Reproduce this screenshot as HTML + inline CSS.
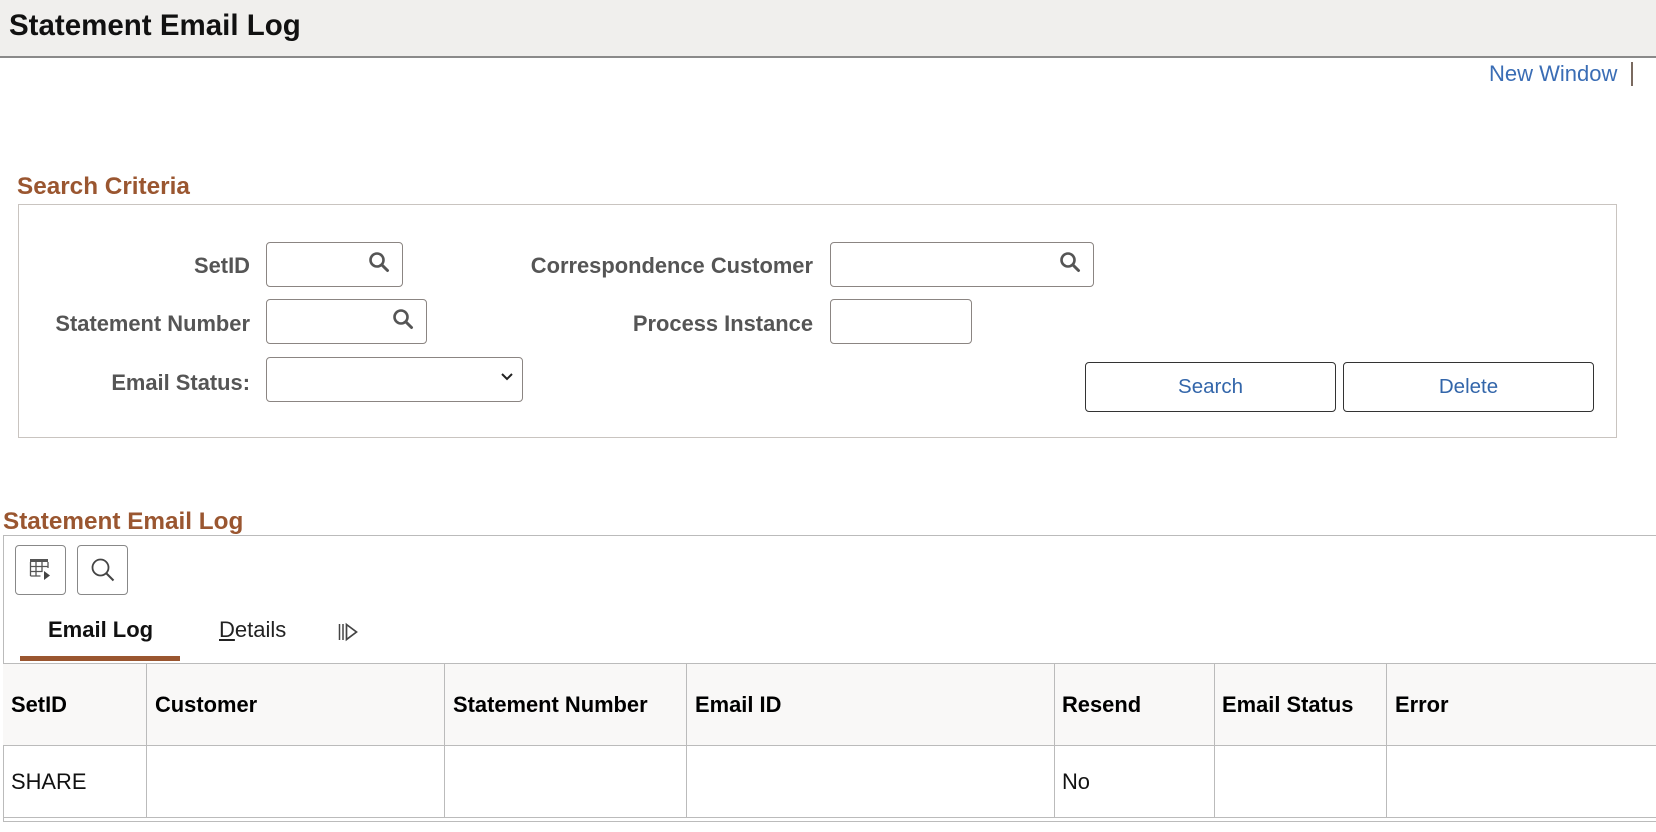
<!DOCTYPE html>
<html><head><meta charset="utf-8"><style>
*{box-sizing:border-box;margin:0;padding:0}
body{width:1656px;height:832px;background:#fff;font-family:"Liberation Sans",Arial,sans-serif;position:relative;overflow:hidden}
.a{position:absolute;white-space:nowrap}
.hdr{left:0;top:0;width:1656px;height:58px;background:#f0efed;border-bottom:2px solid #8a8a8a}
.lbl{font-weight:bold;font-size:21.9px;color:#555;text-align:right}
.inp{border:1px solid #8b8582;border-radius:4px;background:#fff;height:45px}
.h2{font-weight:bold;font-size:24.3px;color:#9a5630}
.btn{border:1px solid #333;border-radius:4px;height:50px;width:251px;font-size:20.5px;color:#3366aa;text-align:center;line-height:48px}
.ib{border:1px solid #888;border-radius:4px;width:51px;height:50px}
.th{font-weight:bold;font-size:21.9px;color:#000}
.vl{position:absolute;top:663px;height:155px;width:1px;background:#bbb}
</style></head><body>
<div class="a hdr"></div>
<div class="a" style="left:9px;top:9px;font-size:29.5px;font-weight:bold;color:#111">Statement Email Log</div>
<div class="a" style="left:1489px;top:61px;font-size:22px;color:#3a6db5">New Window</div>
<div class="a" style="left:1631px;top:62px;width:2px;height:24px;background:#7a6a60"></div>

<div class="a h2" style="left:17px;top:173px">Search Criteria</div>
<div class="a" style="left:18px;top:204px;width:1599px;height:234px;border:1px solid #c9c4c0"></div>

<div class="a lbl" style="left:0;width:250px;top:253px">SetID</div>
<div class="a inp" style="left:266px;top:242px;width:137px"></div>
<svg class="a" style="left:368px;top:251px" width="22" height="22" viewBox="0 0 22 22"><circle cx="9" cy="9" r="6.5" fill="none" stroke="#555" stroke-width="2.6"/><path d="M14 14l5.5 5.5" stroke="#555" stroke-width="3" stroke-linecap="round"/></svg>
<div class="a lbl" style="left:400px;width:413px;top:253px">Correspondence Customer</div>
<div class="a inp" style="left:830px;top:242px;width:264px"></div>
<svg class="a" style="left:1059px;top:251px" width="22" height="22" viewBox="0 0 22 22"><circle cx="9" cy="9" r="6.5" fill="none" stroke="#555" stroke-width="2.6"/><path d="M14 14l5.5 5.5" stroke="#555" stroke-width="3" stroke-linecap="round"/></svg>

<div class="a lbl" style="left:0;width:250px;top:311px">Statement Number</div>
<div class="a inp" style="left:266px;top:299px;width:161px"></div>
<svg class="a" style="left:392px;top:308px" width="22" height="22" viewBox="0 0 22 22"><circle cx="9" cy="9" r="6.5" fill="none" stroke="#555" stroke-width="2.6"/><path d="M14 14l5.5 5.5" stroke="#555" stroke-width="3" stroke-linecap="round"/></svg>
<div class="a lbl" style="left:400px;width:413px;top:311px">Process Instance</div>
<div class="a inp" style="left:830px;top:299px;width:142px"></div>

<div class="a lbl" style="left:0;width:250px;top:370px">Email Status:</div>
<div class="a inp" style="left:266px;top:357px;width:257px"></div>
<svg class="a" style="left:500px;top:372px" width="14" height="10" viewBox="0 0 14 10"><path d="M2 2l5 5 5-5" fill="none" stroke="#222" stroke-width="2"/></svg>

<div class="a btn" style="left:1085px;top:362px">Search</div>
<div class="a btn" style="left:1343px;top:362px">Delete</div>

<div class="a h2" style="left:3px;top:508px">Statement Email Log</div>
<div class="a" style="left:3px;top:535px;width:1660px;height:287px;border:1px solid #bbb;border-right:none"></div>
<div class="a ib" style="left:15px;top:545px"></div>
<svg class="a" style="left:29px;top:558px" width="24" height="24" viewBox="0 0 24 24"><rect x="1" y="1" width="18" height="3" fill="#555"/><path d="M1.5 4v14M7 4v14M13 4v10M19 4v6M1.5 8.5h17.5M1.5 13.5h12M1.5 18h10" fill="none" stroke="#555" stroke-width="1.3"/><path d="M15 13l6 4.5-6 4.5z" fill="#444"/></svg>
<div class="a ib" style="left:77px;top:545px"></div>
<svg class="a" style="left:90px;top:557px" width="26" height="26" viewBox="0 0 26 26"><circle cx="10.5" cy="10.5" r="8" fill="none" stroke="#444" stroke-width="1.8"/><path d="M16.5 16.5l7 7" stroke="#444" stroke-width="2"/></svg>

<div class="a" style="left:48px;top:617px;font-size:22px;font-weight:bold;color:#111">Email Log</div>
<div class="a" style="left:20px;top:656px;width:160px;height:5px;background:#9a5630"></div>
<div class="a" style="left:219px;top:617px;font-size:22px;color:#222"><u>D</u>etails</div>
<svg class="a" style="left:338px;top:622px" width="22" height="20" viewBox="0 0 22 20"><path d="M1.5 2v16M5 2v16" stroke="#444" stroke-width="1.5"/><path d="M8.5 2.5l10 7.5-10 7.5z" fill="none" stroke="#444" stroke-width="1.7"/></svg>

<div class="a" style="left:3px;top:663px;width:1660px;height:83px;background:#f9f8f7;border-top:1px solid #bbb;border-bottom:1px solid #bbb"></div>
<div class="a" style="left:3px;top:817px;width:1660px;height:1px;background:#bbb"></div>
<div class="a" style="left:3px;top:821px;width:1660px;height:1px;background:#bbb"></div>
<div class="vl" style="left:146px"></div><div class="vl" style="left:444px"></div><div class="vl" style="left:686px"></div><div class="vl" style="left:1054px"></div><div class="vl" style="left:1214px"></div><div class="vl" style="left:1386px"></div>
<div class="a th" style="left:11px;top:692px">SetID</div>
<div class="a th" style="left:155px;top:692px">Customer</div>
<div class="a th" style="left:453px;top:692px">Statement Number</div>
<div class="a th" style="left:695px;top:692px">Email ID</div>
<div class="a th" style="left:1062px;top:692px">Resend</div>
<div class="a th" style="left:1222px;top:692px">Email Status</div>
<div class="a th" style="left:1395px;top:692px">Error</div>
<div class="a" style="left:11px;top:769px;font-size:21.9px;color:#111">SHARE</div>
<div class="a" style="left:1062px;top:769px;font-size:21.9px;color:#111">No</div>
</body></html>
